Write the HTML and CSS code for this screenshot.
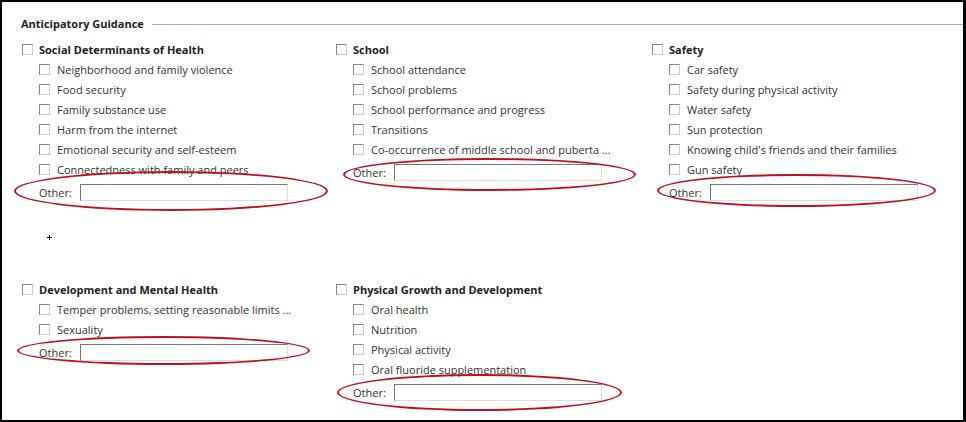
FILE: index.html
```html
<!DOCTYPE html>
<html lang="en">
<head>
    <meta charset="UTF-8">
    <meta name="viewport" content="width=device-width, initial-scale=1.0">
    <title>Anticipatory Guidance</title>
    <link rel="stylesheet" href="styles.css">
</head>
<body>
    <div class="frame">
        <div class="section-title">
            <span class="title-text">Anticipatory Guidance</span>
            <div class="rule"></div>
        </div>
        <div class="groups">
            <div class="group">
                <label class="group-head"><input type="checkbox"> Social Determinants of Health</label>
                <ul class="items">
                    <li><label><input type="checkbox"> Neighborhood and family violence</label></li>
                    <li><label><input type="checkbox"> Food security</label></li>
                    <li><label><input type="checkbox"> Family substance use</label></li>
                    <li><label><input type="checkbox"> Harm from the internet</label></li>
                    <li><label><input type="checkbox"> Emotional security and self-esteem</label></li>
                    <li><label><input type="checkbox"> Connectedness with family and peers</label></li>
                </ul>
                <div class="other">
                    <span>Other:</span><input type="text">
                    <div class="ring ring-social"></div>
                </div>
            </div>
            <div class="group">
                <label class="group-head"><input type="checkbox"> School</label>
                <ul class="items">
                    <li><label><input type="checkbox"> School attendance</label></li>
                    <li><label><input type="checkbox"> School problems</label></li>
                    <li><label><input type="checkbox"> School performance and progress</label></li>
                    <li><label><input type="checkbox"> Transitions</label></li>
                    <li><label><input type="checkbox"> Co-occurrence of middle school and puberta ...</label></li>
                </ul>
                <div class="other">
                    <span>Other:</span><input type="text">
                    <div class="ring ring-school"></div>
                </div>
            </div>
            <div class="group">
                <label class="group-head"><input type="checkbox"> Safety</label>
                <ul class="items">
                    <li><label><input type="checkbox"> Car safety</label></li>
                    <li><label><input type="checkbox"> Safety during physical activity</label></li>
                    <li><label><input type="checkbox"> Water safety</label></li>
                    <li><label><input type="checkbox"> Sun protection</label></li>
                    <li><label><input type="checkbox"> Knowing child's friends and their families</label></li>
                    <li><label><input type="checkbox"> Gun safety</label></li>
                </ul>
                <div class="other">
                    <span>Other:</span><input type="text">
                    <div class="ring ring-safety"></div>
                </div>
            </div>
            <div class="group">
                <label class="group-head"><input type="checkbox"> Development and Mental Health</label>
                <ul class="items">
                    <li><label><input type="checkbox"> Temper problems, setting reasonable limits ...</label></li>
                    <li><label><input type="checkbox"> Sexuality</label></li>
                </ul>
                <div class="other">
                    <span>Other:</span><input type="text">
                    <div class="ring ring-dev"></div>
                </div>
            </div>
            <div class="group">
                <label class="group-head"><input type="checkbox"> Physical Growth and Development</label>
                <ul class="items">
                    <li><label><input type="checkbox"> Oral health</label></li>
                    <li><label><input type="checkbox"> Nutrition</label></li>
                    <li><label><input type="checkbox"> Physical activity</label></li>
                    <li><label><input type="checkbox"> Oral fluoride supplementation</label></li>
                </ul>
                <div class="other">
                    <span>Other:</span><input type="text">
                    <div class="ring ring-growth"></div>
                </div>
            </div>
        </div>
        <div class="cursor"></div>
    </div>
</body>
</html>
```

FILE: styles.css
```css
* {
    box-sizing: border-box;
}
body {
    margin: 0;
    font-family: "Open Sans", "Noto Sans", Arial, sans-serif;
    font-size: 11px;
    color: #333;
    background: white;
}
.frame {
    position: relative;
    width: 966px;
    height: 422px;
    border: 2px solid black;
    border-right-width: 3px;
    padding: 11px 0 0 20px;
    overflow: hidden;
}
.section-title {
    display: flex;
    align-items: center;
    height: 20px;
}
.title-text {
    font-weight: bold;
    color: #222;
    margin-left: -1px;
}
.rule {
    flex: 1;
    height: 1px;
    margin-left: 8px;
    margin-top: 3px;
    background: #aaa;
}
.groups {
    display: grid;
    grid-template-columns: 314px 316px 1fr;
    row-gap: 77px;
    margin-top: 6px;
}
.group-head,
.items label {
    display: flex;
    align-items: center;
    height: 20px;
    gap: 6px;
}
.group-head {
    font-weight: bold;
    color: #222;
}
.items {
    list-style: none;
    margin: 0;
    padding: 0 0 0 17px;
}
.items label {
    gap: 7px;
}
input[type="checkbox"] {
    appearance: none;
    margin: 0;
    width: 11px;
    height: 11px;
    border: 1px solid;
    border-color: #888 #ccc #ccc #888;
    background: white;
    flex: none;
}
.other {
    position: relative;
    display: flex;
    align-items: center;
    height: 20px;
    margin-top: 3px;
    padding-left: 17px;
    gap: 8px;
}
.other input {
    width: 208px;
    height: 17px;
    margin: 0;
    border: 1px solid;
    border-color: #777 #ddd #ddd #777;
    background: white;
}
.ring {
    position: absolute;
    border: 2px solid #c0101c;
    border-radius: 50%;
}
.ring-social {
    left: -8px;
    top: -11px;
    width: 314px;
    height: 40px;
}
.ring-school {
    left: 7px;
    top: -4px;
    width: 293px;
    height: 33px;
}
.ring-safety {
    left: 5px;
    top: -8px;
    width: 279px;
    height: 33px;
}
.ring-dev {
    left: -5px;
    top: -6px;
    width: 293px;
    height: 29px;
}
.ring-growth {
    left: 1px;
    top: -8px;
    width: 285px;
    height: 37px;
}
.cursor {
    position: absolute;
    left: 45px;
    top: 233px;
    width: 5px;
    height: 5px;
    background:
        linear-gradient(black, black) center / 5px 1px no-repeat,
        linear-gradient(black, black) center / 1px 5px no-repeat;
}
```
